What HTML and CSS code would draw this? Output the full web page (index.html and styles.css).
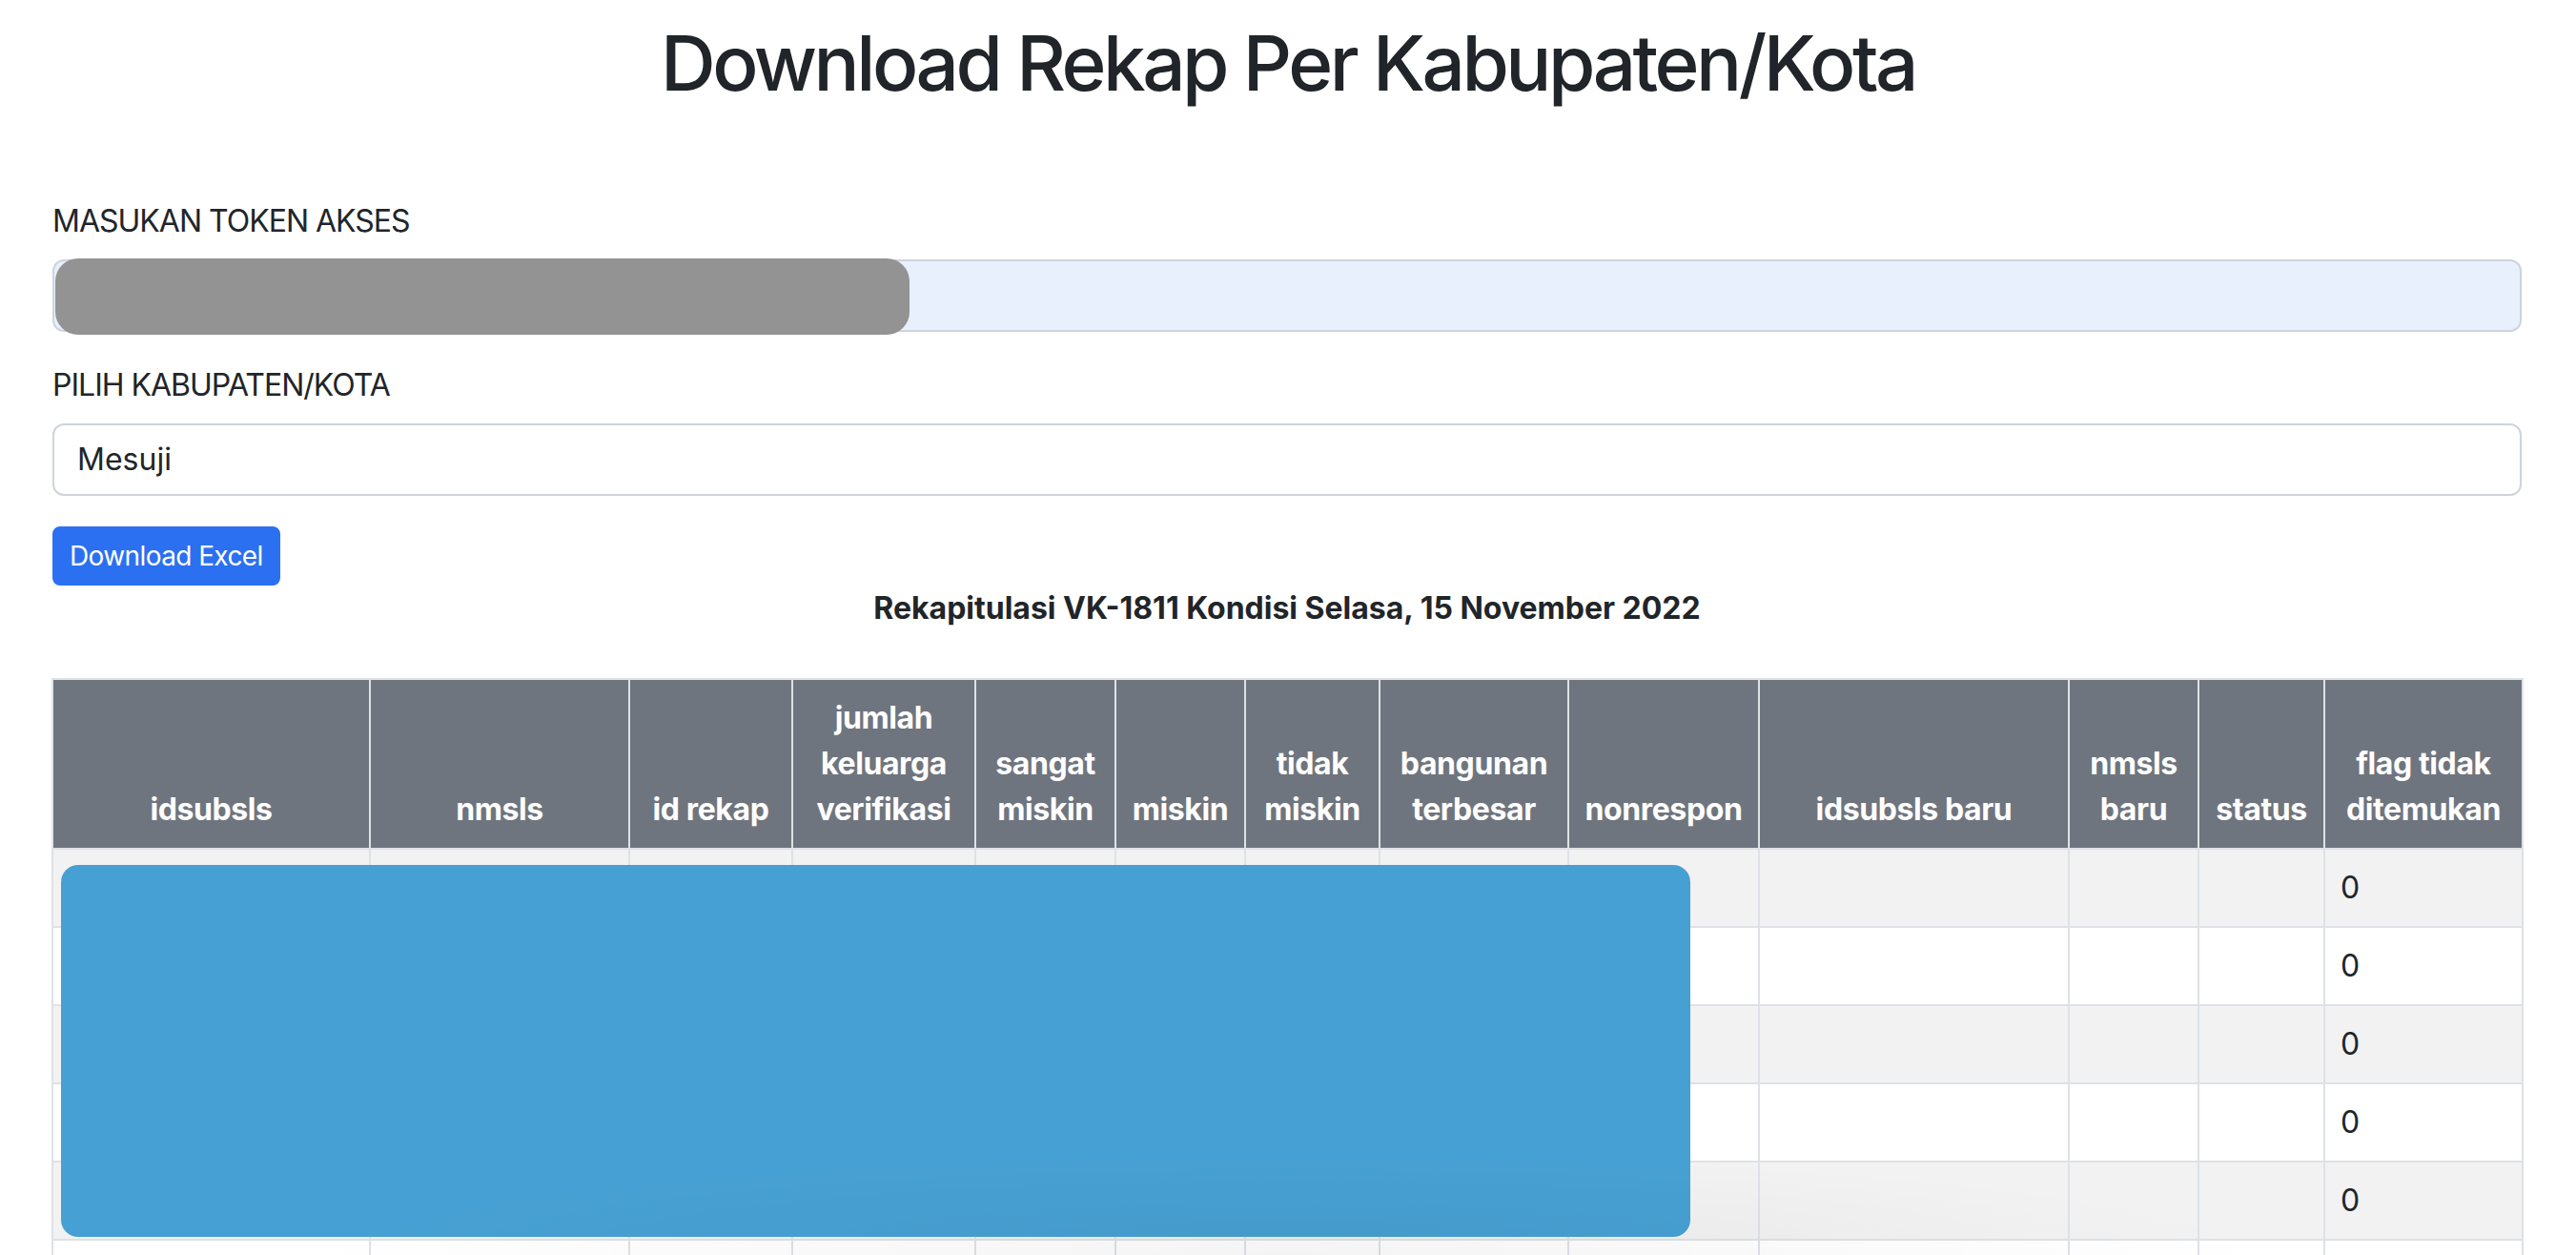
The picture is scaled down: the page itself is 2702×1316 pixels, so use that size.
FILE: index.html
```html
<!DOCTYPE html>
<html lang="id">
<head>
<meta charset="utf-8">
<title>Download Rekap Per Kabupaten/Kota</title>
<link rel="stylesheet" href="styles.css">
</head>
<body>
<div class="page">
  <h1 class="title">Download Rekap Per Kabupaten/Kota</h1>
  <div class="container">
    <label class="label">MASUKAN TOKEN AKSES</label>
    <div class="field field-token">
      <div class="redact-gray"></div>
    </div>
    <label class="label">PILIH KABUPATEN/KOTA</label>
    <div class="field field-select">Mesuji</div>
    <button class="btn">Download Excel</button>
    <p class="caption">Rekapitulasi VK-1811 Kondisi Selasa, 15 November 2022</p>
    <div class="table-wrap">
      <table class="rekap">
        <colgroup>
          <col class="c1"><col class="c2"><col class="c3"><col class="c4"><col class="c5"><col class="c6"><col class="c7"><col class="c8"><col class="c9"><col class="c10"><col class="c11"><col class="c12"><col class="c13">
        </colgroup>
        <thead>
          <tr>
            <th>idsubsls</th>
            <th>nmsls</th>
            <th>id rekap</th>
            <th>jumlah<br>keluarga<br>verifikasi</th>
            <th>sangat<br>miskin</th>
            <th>miskin</th>
            <th>tidak<br>miskin</th>
            <th>bangunan<br>terbesar</th>
            <th>nonrespon</th>
            <th>idsubsls baru</th>
            <th>nmsls<br>baru</th>
            <th>status</th>
            <th>flag tidak<br>ditemukan</th>
          </tr>
        </thead>
        <tbody>
          <tr><td></td><td></td><td></td><td></td><td></td><td></td><td></td><td></td><td></td><td></td><td></td><td></td><td>0</td></tr>
          <tr><td></td><td></td><td></td><td></td><td></td><td></td><td></td><td></td><td></td><td></td><td></td><td></td><td>0</td></tr>
          <tr><td></td><td></td><td></td><td></td><td></td><td></td><td></td><td></td><td></td><td></td><td></td><td></td><td>0</td></tr>
          <tr><td></td><td></td><td></td><td></td><td></td><td></td><td></td><td></td><td></td><td></td><td></td><td></td><td>0</td></tr>
          <tr><td></td><td></td><td></td><td></td><td></td><td></td><td></td><td></td><td></td><td></td><td></td><td></td><td>0</td></tr>
          <tr><td></td><td></td><td></td><td></td><td></td><td></td><td></td><td></td><td></td><td></td><td></td><td></td><td></td></tr>
        </tbody>
      </table>
      <div class="redact-blue"></div>
    </div>
  </div>
  <div class="bottom-shade"></div>
</div>
</body>
</html>
```
FILE: styles.css
```css
html, body {
  margin: 0;
  padding: 0;
  background: #ffffff;
}
body {
  font-family: Inter, "Noto Sans", "Liberation Sans", sans-serif;
  color: #212529;
  font-size: 32px;
  line-height: 48px;
}
.page {
  position: relative;
  height: 100vh;
  overflow: hidden;
}
.title {
  font-size: 80px;
  font-weight: 500;
  line-height: 96px;
  letter-spacing: -3.5px;
  text-align: center;
  margin: 18px 0 94px;
}
.container {
  padding: 0 57px 0 55px;
}
.label {
  display: block;
  font-size: 32px;
  line-height: 48px;
  letter-spacing: -1px;
  margin-bottom: 16px;
  padding-top: 2px;
  margin-top: -2px;
}
.field {
  position: relative;
  box-sizing: border-box;
  height: 76px;
  border: 2px solid #ced4da;
  border-radius: 12px;
  padding: 0 24px;
  margin-bottom: 32px;
  display: flex;
  align-items: center;
  font-size: 32px;
}
.field-token {
  background: #e8f0fe;
}
.field-select {
  background: #ffffff;
}
.redact-gray {
  position: absolute;
  left: 1px;
  top: -3px;
  width: 896px;
  height: 80px;
  background: #939393;
  border-radius: 24px;
}
.btn {
  display: block;
  box-sizing: border-box;
  height: 62px;
  padding: 0 16px;
  border: 2px solid #2b70f1;
  border-radius: 8px;
  background: #2b70f1;
  color: #ffffff;
  font-family: inherit;
  font-size: 28px;
  line-height: 42px;
  letter-spacing: -0.6px;
}
.caption {
  margin: 0 0 49px;
  text-align: center;
  font-weight: 700;
  font-size: 32px;
  line-height: 48px;
}
.table-wrap {
  position: relative;
}
.rekap {
  width: 2591px;
  margin-left: -1px;
  table-layout: fixed;
  border-collapse: collapse;
  border: 2px solid #dee2e6;
}
.rekap th, .rekap td {
  border: 2px solid #dee2e6;
  padding: 16px;
  line-height: 48px;
  font-size: 32px;
}
.rekap th {
  background: #6f757e;
  color: #ffffff;
  font-weight: 700;
  text-align: center;
  vertical-align: bottom;
  letter-spacing: -0.4px;
}
.rekap td {
  text-align: left;
  vertical-align: top;
  height: 48px;
}
.rekap tbody tr:nth-child(odd) td {
  background: #f2f2f2;
}
.c1 { width: 333px; }
.c2 { width: 272px; }
.c3 { width: 171px; }
.c4 { width: 192px; }
.c5 { width: 147px; }
.c6 { width: 136px; }
.c7 { width: 141px; }
.c8 { width: 198px; }
.c9 { width: 200px; }
.c10 { width: 325px; }
.c11 { width: 136px; }
.c12 { width: 132px; }
.c13 { width: 208px; }
.redact-blue {
  position: absolute;
  left: 9px;
  top: 196px;
  width: 1709px;
  height: 390px;
  background: #47a0d3;
  border-radius: 18px;
}
.bottom-shade {
  position: absolute;
  left: 300px;
  right: 300px;
  bottom: 0;
  height: 110px;
  pointer-events: none;
  background: radial-gradient(ellipse at 50% 100%, rgba(0, 0, 0, 0.045), rgba(0, 0, 0, 0) 70%);
}
```
